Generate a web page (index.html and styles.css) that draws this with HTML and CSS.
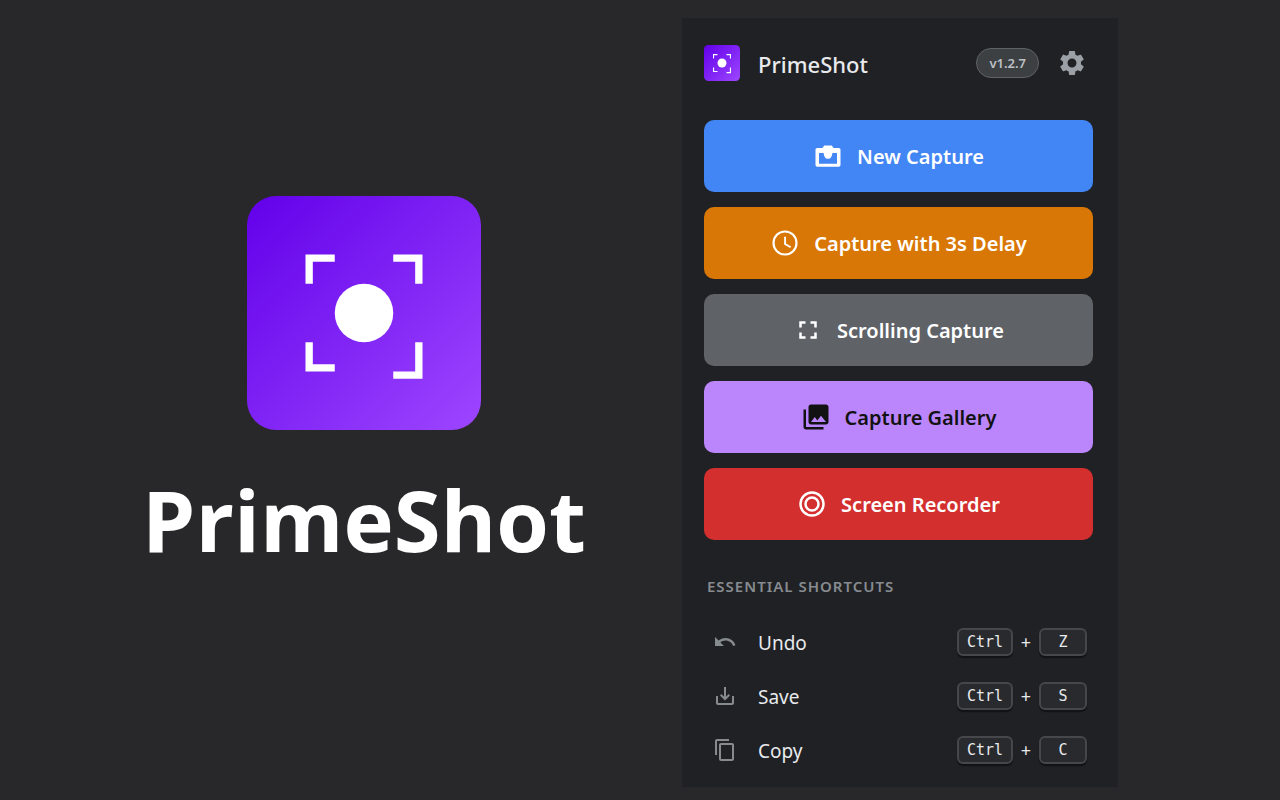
FILE: index.html
```html
<!DOCTYPE html>
<html lang="en">
<head>
    <meta charset="UTF-8">
    <meta name="viewport" content="width=device-width, initial-scale=1.0">
    <title>PrimeShot</title>
    <link rel="stylesheet" href="styles.css">
</head>
<body>

<!-- Brand side -->
<section class="hero">
    <svg class="hero-logo" viewBox="0 0 32 32" aria-hidden="true">
        <defs>
            <linearGradient id="brand" x1="0" y1="0" x2="1" y2="1">
                <stop offset="0" stop-color="#6200ea"/>
                <stop offset="1" stop-color="#9d46ff"/>
            </linearGradient>
        </defs>
        <rect width="32" height="32" rx="4" fill="url(#brand)"/>
        <circle cx="16" cy="16" r="4" fill="#fff"/>
        <path d="M8 8h4v1H9v3H8zM20 8h4v4h-1V9h-3zM8 20h1v3h3v1H8zM23 20h1v5h-4v-1h3z" fill="#fff"/>
    </svg>
    <h1 class="hero-title">PrimeShot</h1>
</section>

<!-- Extension popup -->
<main class="panel">
    <header class="panel-header">
        <svg class="panel-logo" viewBox="0 0 32 32" aria-hidden="true">
            <rect width="32" height="32" rx="4" fill="url(#brand)"/>
            <circle cx="16" cy="16" r="4" fill="#fff"/>
            <path d="M8 8h4v1H9v3H8zM20 8h4v4h-1V9h-3zM8 20h1v3h3v1H8zM23 20h1v5h-4v-1h3z" fill="#fff"/>
        </svg>
        <h2 class="panel-title">PrimeShot</h2>
        <span class="version">v1.2.7</span>
        <button class="settings" type="button" aria-label="Settings">
            <svg viewBox="0 0 24 24"><path d="M19.14 12.94c.04-.3.06-.61.06-.94s-.02-.64-.07-.94l2.03-1.58c.18-.14.23-.41.12-.61l-1.92-3.32c-.12-.22-.37-.29-.59-.22l-2.39.96c-.5-.38-1.03-.7-1.62-.94l-.36-2.54c-.04-.24-.24-.41-.48-.41h-3.84c-.24 0-.43.17-.47.41l-.36 2.54c-.59.24-1.13.57-1.62.94l-2.39-.96c-.22-.08-.47 0-.59.22L2.74 8.87c-.12.21-.08.47.12.61l2.03 1.58c-.05.3-.09.63-.09.94s.02.64.07.94l-2.03 1.58c-.18.14-.23.41-.12.61l1.92 3.32c.12.22.37.29.59.22l2.39-.96c.5.38 1.03.7 1.62.94l.36 2.54c.05.24.24.41.48.41h3.84c.24 0 .44-.17.47-.41l.36-2.54c.59-.24 1.13-.56 1.62-.94l2.39.96c.22.08.47 0 .59-.22l1.92-3.32c.12-.22.07-.47-.12-.61l-2.01-1.58zM12 15.6c-1.98 0-3.6-1.62-3.6-3.6s1.62-3.6 3.6-3.6 3.6 1.62 3.6 3.6-1.62 3.6-3.6 3.6z"/></svg>
        </button>
    </header>

    <div class="actions">
        <button class="action new" type="button">
            <svg viewBox="0 0 24 24"><path fill-rule="evenodd" d="M3.500 5.500H7.500L9 3.500h6l1.500 2h4c1 0 1.500.6 1.500 1.500v12c0 1-.6 1.500-1.500 1.500h-17c-.9 0-1.500-.5-1.500-1.500V7c0-.9.5-1.500 1.500-1.500zM4.800 9.500v8.700h14.400V9.500h-3.700c-.2 2.700-1.400 4.700-3.500 4.700s-3.300-2-3.500-4.700z"/></svg>
            New Capture
        </button>
        <button class="action delay" type="button">
            <svg viewBox="0 0 24 24"><circle cx="12" cy="12" r="9.200" fill="none" stroke="currentColor" stroke-width="1.700"/><path d="M11.300 7h1.500v5.300l4.100 2.400-.8 1.300-4.800-2.900z"/></svg>
            Capture with 3s Delay
        </button>
        <button class="action scroll" type="button">
            <svg viewBox="0 0 24 24"><path d="M7 14H5v5h5v-2H7v-3zm-2-4h2V7h3V5H5v5zm12 7h-3v2h5v-5h-2v3zM14 5v2h3v3h2V5h-5z"/></svg>
            Scrolling Capture
        </button>
        <button class="action gallery" type="button">
            <svg viewBox="0 0 24 24"><path d="M22 16V4c0-1.100-.9-2-2-2H8c-1.100 0-2 .9-2 2v12c0 1.100.9 2 2 2h12c1.100 0 2-.9 2-2zm-11-4l2.030 2.710L16 11l4 5H8l3-4zM2 6v14c0 1.100.9 2 2 2h14v-2H4V6H2z"/></svg>
            Capture Gallery
        </button>
        <button class="action record" type="button">
            <svg viewBox="0 0 24 24"><g fill="none" stroke="currentColor" stroke-width="2"><circle cx="12" cy="12" r="9.200"/><circle cx="12" cy="12" r="5.200"/></g></svg>
            Screen Recorder
        </button>
    </div>

    <h3 class="shortcuts-title">Essential Shortcuts</h3>
    <ul class="shortcuts">
        <li class="shortcut">
            <svg viewBox="0 0 24 24"><path d="M12.500 8c-2.650 0-5.050.99-6.900 2.600L2 7v9h9l-3.620-3.620c1.390-1.160 3.160-1.880 5.120-1.880 3.540 0 6.550 2.310 7.600 5.500l2.370-.78C21.080 11.030 17.150 8 12.500 8z"/></svg>
            <span class="shortcut-name">Undo</span>
            <kbd>Ctrl</kbd><span class="plus">+</span><kbd>Z</kbd>
        </li>
        <li class="shortcut">
            <svg viewBox="0 0 24 24"><path d="M19 12v7H5v-7H3v7c0 1.100.9 2 2 2h14c1.100 0 2-.9 2-2v-7h-2zm-6 .67l2.590-2.580L17 11.500l-5 5-5-5 1.410-1.410L11 12.670V3h2v9.670z"/></svg>
            <span class="shortcut-name">Save</span>
            <kbd>Ctrl</kbd><span class="plus">+</span><kbd>S</kbd>
        </li>
        <li class="shortcut">
            <svg viewBox="0 0 24 24"><path d="M16 1H4c-1.100 0-2 .9-2 2v14h2V3h12V1zm3 4H8c-1.100 0-2 .9-2 2v14c0 1.100.9 2 2 2h11c1.100 0 2-.9 2-2V7c0-1.100-.9-2-2-2zm0 16H8V7h11v14z"/></svg>
            <span class="shortcut-name">Copy</span>
            <kbd>Ctrl</kbd><span class="plus">+</span><kbd>C</kbd>
        </li>
    </ul>
</main>

</body>
</html>
```
FILE: styles.css
```css
* {
    box-sizing: border-box;
}
body {
    font-family: "Noto Sans", "Open Sans", sans-serif;
    background-color: #28282a;
    color: #e8eaed;
    display: grid;
    grid-template-columns: 682fr 436fr 162fr;
    align-items: start;
    min-height: 100vh;
    margin: 0;
    padding: 18px 0 13px;
}
h1, h2, h3, ul {
    margin: 0;
    padding: 0;
}
svg {
    display: block;
    flex: none;
    fill: currentColor;
}

/* Brand side */
.hero {
    display: flex;
    flex-direction: column;
    align-items: center;
    align-self: center;
    gap: 32px;
    padding: 0 0 34px 46px;
}
.hero-logo {
    width: 234px;
    height: 234px;
}
.hero-title {
    font-family: "Open Sans", "Noto Sans", sans-serif;
    font-size: 85px;
    font-weight: 700;
    line-height: 114px;
    color: #fff;
}

/* Popup panel */
.panel {
    background-color: #202124;
    padding: 27px 25px 10px 22px;
}
.panel-header {
    display: flex;
    align-items: center;
    padding-right: 6px;
    margin-bottom: 39px;
}
.panel-logo {
    width: 36px;
    height: 36px;
}
.panel-title {
    flex: 1;
    margin-left: 18px;
    padding-top: 2px;
    font-size: 22px;
    font-weight: 500;
    line-height: 34px;
}
.version {
    padding: 0 12px;
    border: 1px solid #5f6368;
    border-radius: 15px;
    background-color: #3c4043;
    color: #bdc1c6;
    font-size: 13px;
    font-weight: 600;
    line-height: 28px;
}
.settings {
    margin-left: 18px;
    padding: 0;
    border: none;
    background: none;
    color: #9aa0a6;
    cursor: pointer;
}
.settings svg {
    width: 30px;
    height: 30px;
}
.actions {
    display: flex;
    flex-direction: column;
    gap: 15px;
}
.action {
    display: flex;
    align-items: center;
    justify-content: center;
    gap: 14px;
    height: 72px;
    padding: 0;
    border: none;
    border-radius: 10px;
    color: #fff;
    font-family: inherit;
    font-size: 20px;
    font-weight: 600;
    cursor: pointer;
}
.action svg {
    width: 30px;
    height: 30px;
}
.new {
    background-color: #4285f4;
}
.delay {
    background-color: #d97706;
}
.scroll {
    background-color: #5f6368;
}
.gallery {
    background-color: #bb86fc;
    color: #121212;
}
.record {
    background-color: #d32f2f;
}

/* Shortcut list */
.shortcuts-title {
    margin: 34px 0 17px 3px;
    color: #868b90;
    font-size: 15px;
    font-weight: 600;
    line-height: 24px;
    letter-spacing: 1px;
    text-transform: uppercase;
}
.shortcuts {
    list-style: none;
}
.shortcut {
    display: flex;
    align-items: center;
    height: 54px;
    padding: 0 6px 0 9px;
}
.shortcut svg {
    width: 24px;
    height: 24px;
    color: #868b90;
}
.shortcut-name {
    flex: 1;
    margin-left: 21px;
    padding-top: 2px;
    font-size: 19px;
}
kbd {
    min-width: 48px;
    padding: 0 8px;
    border: 2px solid #45474b;
    border-radius: 6px;
    background-color: #292a2d;
    box-shadow: 0 2px 1px #111214;
    font-family: "DejaVu Sans Mono", monospace;
    font-size: 15px;
    line-height: 24px;
    text-align: center;
}
.plus {
    width: 26px;
    font-size: 18px;
    text-align: center;
}
```
